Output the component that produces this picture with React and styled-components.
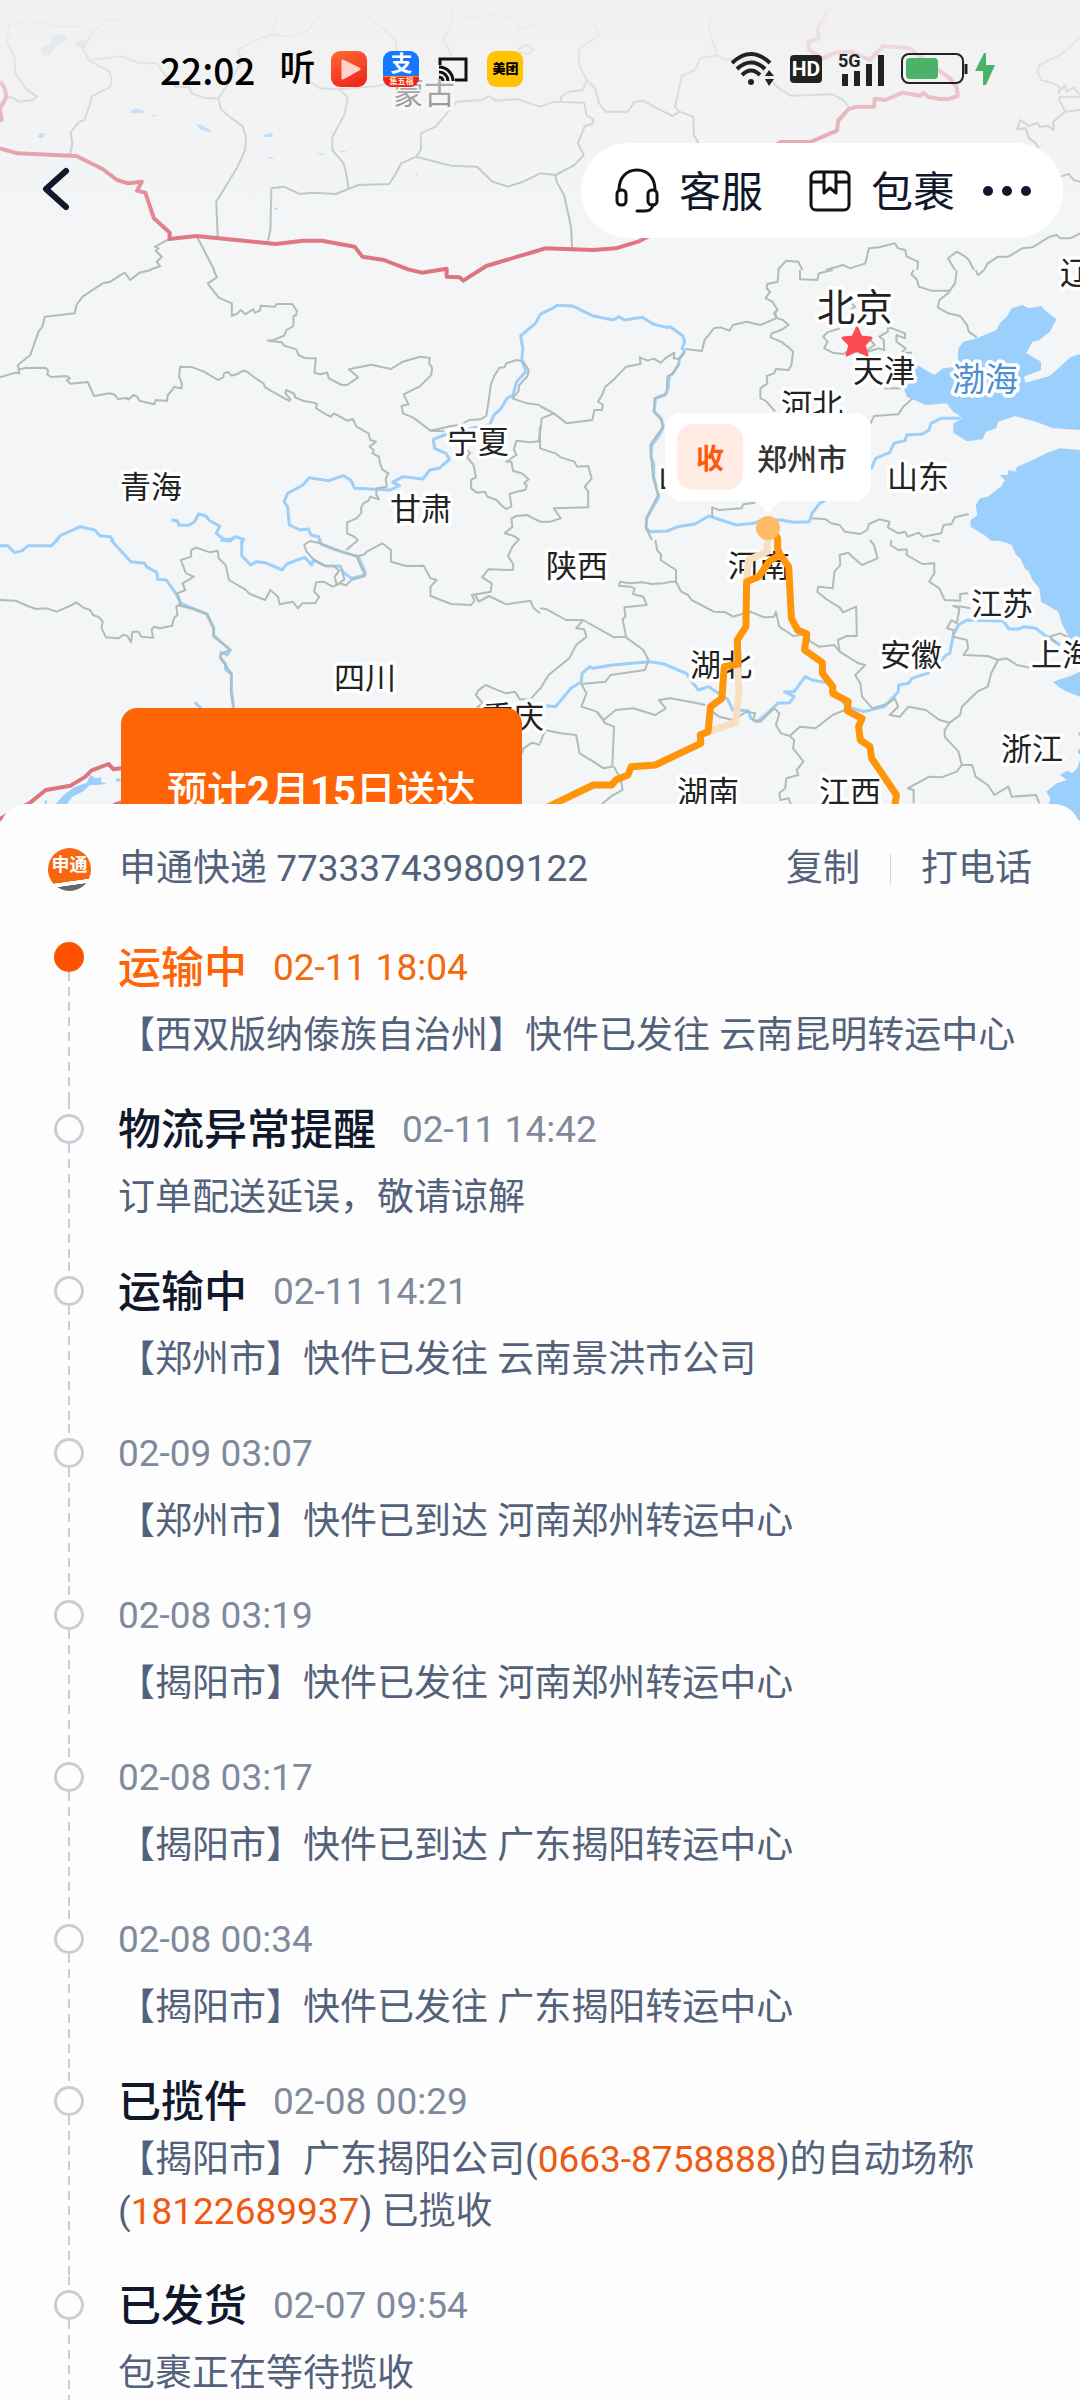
import React from "react";
import styled, { createGlobalStyle } from "styled-components";

const GlobalStyle = createGlobalStyle`
  * { box-sizing: border-box; }
  body {
    margin: 0;
    background: #fdfdfe;
    font-family: Roboto, "Noto Sans CJK SC", sans-serif;
  }
  button {
    padding: 0;
    border: 0;
    background: none;
    font: inherit;
    color: inherit;
    cursor: pointer;
  }
`;

const Page = styled.div`
  display: flex;
  flex-direction: column;
  height: 100vh;
  overflow: hidden;
`;

/* ---------- map ---------- */

const MapArea = styled.header`
  position: relative;
  flex: none;
  height: 804px;
`;

const MapSvg = styled.svg`
  position: absolute;
  top: 0;
  left: 0;
  width: 100%;
  height: 840px;
  background: #f4f5f7;
`;

const Line = styled.path`
  fill: none;
  stroke-linejoin: round;
  vector-effect: non-scaling-stroke;
`;

const Border = styled(Line)`
  stroke: #afbdb6;
  stroke-width: 2px;
`;

const Frontier = styled(Line)`
  stroke: #de7480;
  stroke-width: 4px;
`;

const River = styled(Line)`
  stroke: #9ccff9;
  stroke-width: 3px;
`;

const Route = styled(Line)`
  stroke: ${props => (props.$faint ? "#f8dfc0" : "#ff9508")};
  stroke-width: 7px;
`;

const Sea = styled.path`
  fill: #9bcffc;
`;

const Place = styled.text`
  font-family: "Noto Sans CJK SC", sans-serif;
  font-size: ${props => props.$size || 31}px;
  fill: ${props => props.$fill || "#222"};
  text-anchor: middle;
  stroke: #fff;
  stroke-width: 7px;
  stroke-linejoin: round;
  paint-order: stroke;
`;

const TopFade = styled.div`
  position: absolute;
  inset: 0 0 auto 0;
  height: 250px;
  background: linear-gradient(#f1f1f1, rgba(241, 241, 241, 0));
`;

// every section of the map has its own grid, 1568 units over 540px
const sections = [
  {
    x: 0,
    y: 0,
    borders: [
      "M130 5L95 45 70 65 25 75 20 130 42 170 45 220 75 265 107 290 95 300 55 305 35 292 15 292",
      "M70 65L120 65 180 80 245 78 267 100 240 150 265 185 318 215 325 240 318 262 265 290 262 310 245 360 230 365 205 398 210 430 203 465",
      "M267 100L310 60 400 55 460 10",
      "M265 180L350 168 405 190 455 190 490 240 510 260 550 262 555 280 600 295 635 295 700 190 692 150 740 120 790 105 845 108 890 95 920 60 930 40",
      "M635 295L640 325 660 345 705 380 714 410 712 450 690 500 628 605 632 710",
      "M800 0L805 40 790 105",
      "M890 240L930 265 985 268 1010 292 1000 345 965 410 965 450 998 490 1005 520 1012 565",
      "M1055 35L1100 75 1150 120 1155 240 1100 258 985 268",
      "M778 722L785 690 788 565 825 560 870 582 910 578 975 582 1040 555 1130 552 1150 520 1165 490 1208 470 1222 450 1222 400 1265 380 1310 325 1325 305 1400 300 1420 288 1440 302 1500 297 1568 320",
      "M1208 470L1310 497 1385 500 1430 545 1475 560 1520 545 1568 520",
      "M1315 0L1310 85 1285 120 1300 140 1310 170",
      "M1340 55L1420 45 1480 50 1510 85 1568 70",
      "M1505 145L1530 135 1550 148 1535 162 1510 158Z",
      "M490 718L450 740 460 745 452 752 465 765 470 770 455 785 465 798 435 810",
      "M573 712L622 810",
    ],
    frontiers: [
      "M0 445L50 460 222 468 298 507 340 540 372 550 412 545 398 572 422 578 447 655 493 698 492 717 570 708 800 732 880 722 935 722 1030 740 1052 770 1115 780 1185 808 1225 818 1297 806 1297 830 1335 832 1345 842 1412 798 1568 750",
      "M0 245Q20 265 17 295L0 325 5 365",
    ],
    seas: [
      "M118 145L145 130 150 105 190 103 197 120 165 140 145 165 125 165Z",
      "M218 130L235 118 255 122 245 145 225 140Z",
      "M245 165L272 180 258 186Z",
      "M377 335L395 325 418 332 415 340 380 340Z",
      "M433 342L455 345 450 352Z",
      "M567 372L585 375 615 392 610 397 585 390Z",
      "M763 405L790 398 793 410 770 412Z",
      "M775 472L802 474 780 477Z",
      "M108 410L120 398 132 402 122 415Z",
      "M917 461L950 461 935 466Z",
      "M987 452L1010 454 990 457Z",
      "M795 625L810 622 800 630Z",
      "M1205 522L1215 520 1210 526Z",
    ],
  },
  {
    x: 540,
    y: 0,
    borders: [
      "M115 20L165 80 172 105 115 145 112 190 135 240 160 265 172 310 190 335 255 335 275 305 300 302 340 325 385 348 405 335 392 320 412 228 450 210 465 175 515 165 490 90 497 50 475 20",
      "M515 165L535 178 620 178 690 262 728 287 850 283 880 300 900 325",
      "M135 240L125 270 85 275 62 290 60 305 128 308 135 345 155 358 152 372 130 378 110 430 127 465 100 495 45 525 0 520",
      "M0 320L35 307 60 305",
      "M45 525L48 545 70 585 90 680 93 745",
      "M405 335L445 350 447 405 460 430",
      "M1568 110L1540 140 1510 165 1450 195 1445 215 1455 240 1490 250 1510 262 1505 280 1525 255 1530 275 1550 262 1568 285",
      "M1568 290L1510 290 1508 300 1525 335 1490 365 1492 390 1475 378 1450 380 1445 368 1420 378 1395 360 1385 388 1410 385 1420 415 1440 430 1448 445",
      "M1568 330L1525 335",
      "M1510 530L1535 522 1550 540 1568 545",
      "M690 810L715 782 750 785 762 810",
      "M830 810L880 795 900 805 945 790 955 745 985 742 1030 730 1040 745 1060 750 1065 770 1098 785 1095 810",
      "M1205 810L1185 775 1210 755 1235 770 1245 780 1260 810",
      "M1290 810L1300 790 1330 770 1360 770 1400 745 1430 742 1480 710 1500 705 1510 715 1540 715 1568 700",
    ],
    frontiers: [
      "M0 750L15 745 155 750 220 745 285 725 310 712 600 480 700 426 785 426 862 392 866 362 895 328 918 320 970 320 972 296 1002 300 1053 278 1105 287 1112 278 1128 291 1160 297 1190 296 1213 288 1210 262 1190 235 1072 145 997 138 958 180 905 155 860 157 820 175 782 150 778 125 810 115 805 85 842 20",
    ],
    seas: ["M515 398L533 378 520 395Z"],
  },
  {
    x: 0,
    y: 270,
    borders: [
      "M438 0L405 8 378 30 362 8 320 35 298 40 240 80 222 105 217 130 130 140 123 170 112 185 88 255 52 285 56 310 45 308 0 322",
      "M56 298L75 294 132 293 140 302 137 313 148 321 193 318 203 325 194 332 205 341 255 336 273 378 318 370 333 374 342 387 368 384 372 389 388 375 398 380 405 392 435 400 448 403 452 390 485 393 487 375 500 360 505 351 527 355 528 340 520 320 523 290 560 292 592 305 633 330 648 322 650 310 662 306 672 317 690 312 705 302 718 305 738 322 765 340 770 352 800 370 840 393 843 388 828 368 832 360 855 372 857 382 882 393 912 398 920 402 918 415 950 435 960 440 970 430 1008 452 1025 447 1035 470 1070 490 1075 510 1092 515 1073 530 1085 540 1082 550 1100 560 1103 578 1110 598 1128 610 1120 625 1123 650 1095 655 1092 672 1100 688 1075 680 1070 692 1055 700 1048 715 1050 728 1035 745 1008 757 1008 790 1025 798 1040 810",
      "M620 0L630 22 603 40 635 83 673 100 673 138 690 130 700 120 712 133 735 118 740 128 755 122 757 107 798 110 803 102 848 102 862 122 860 135 852 138 852 168 832 180 825 197 795 210 778 212 818 217 825 227 860 238 867 255 885 264 917 265 913 308 930 313 950 308 955 325 992 345 1008 345 1040 322 1013 298 1078 284 1135 297 1170 275 1220 260 1248 264 1246 280 1255 295 1252 315 1218 350 1172 373 1186 403 1166 408 1170 430 1200 443 1250 482 1310 468 1338 464 1362 450 1395 448 1412 438 1420 385 1425 345 1435 318 1450 293 1465 292 1470 280 1500 270 1520 275 1535 300 1532 318 1508 345 1505 365 1488 385 1530 400 1568 405",
      "M1250 482L1290 484",
      "M1358 540L1365 550 1355 560 1375 585 1382 622 1368 630 1368 655 1385 668 1408 665 1415 680 1442 690 1455 705 1470 717 1485 710 1480 672 1500 665 1525 660 1530 645 1522 640 1535 628 1515 610 1490 603 1485 575 1470 575 1488 562 1500 555 1492 538 1500 512 1540 517 1568 513",
      "M1568 755L1530 735 1500 738 1485 745 1488 770 1465 790 1490 797 1510 810",
      "M1568 470L1565 515",
    ],
    rivers: [
      "M1568 133L1555 160 1512 197 1518 235 1515 270 1527 305 1500 335 1490 375 1472 385 1455 415 1433 437 1422 465 1370 475 1290 495 1258 508 1262 535 1295 550 1305 568 1275 595 1248 600 1228 627 1170 620 1140 637 1160 647 1133 660 1030 655 1018 630 998 617 955 632 898 623 880 645 835 670 825 695 835 710 840 765 872 780 895 777 903 795 925 800 930 822",
      "M160 815L175 797 233 770 275 780 290 797 320 800 330 815",
      "M498 750L515 753 520 766 548 766 565 755 577 732 598 738 608 752 638 768 628 790 650 808 672 808 683 800 708 808 704 815",
    ],
  },
  {
    x: 540,
    y: 270,
    borders: [
      "M693 0L690 35 660 42 658 55 668 65 655 85 675 95 690 120 680 130 690 145 705 150 722 165 700 180 672 190 670 203 700 215 722 232 735 245 730 285 722 300 685 297 680 310 658 318 660 340 640 355 640 385 655 392 683 425",
      "M683 122L685 145 640 165 600 155 560 165 550 182 525 172 505 175 478 210 470 243 422 237",
      "M420 248L405 267 388 265 390 248 368 262 350 278 330 266 312 272 290 262 292 282 250 290 215 328 190 350 180 375 168 395 183 405 180 420 158 420 152 450 112 455 78 460 40 430 0 408",
      "M40 430L5 445 0 490 0 535 45 550 60 562 100 575 108 590 140 588 150 625 130 650 140 665 140 712 40 715 60 745 30 755 0 755",
      "M405 280L385 310 370 320 368 370 333 385 330 425 352 450 357 470 320 525 328 620 343 675 308 745 308 775 325 810",
      "M500 740L500 712 520 720 585 715 590 703 625 698",
      "M790 745L830 748 845 760 870 765 885 785 930 792 950 780 955 762 985 748 1015 755 1010 772 1040 790 1060 785 1068 800 1100 788 1112 800 1165 790 1172 765 1195 762 1205 742 1245 732",
      "M755 0L755 28 805 30 810 10 850 0",
      "M1085 0L1078 12 1095 30 1100 50 1135 62 1190 62 1205 40 1210 0",
      "M1190 65L1160 90 1155 112 1185 130 1220 138 1240 165 1245 185 1268 202",
      "M1265 0L1272 15 1290 0",
      "M870 175L835 187 822 200 835 215 825 235 850 248 880 252 900 240 935 250 985 235 1000 240 998 210 985 200 1010 185 1010 170 1060 190 1060 205 1035 195 1035 215 1062 235 1050 248 1080 248",
      "M950 200L972 225 950 240",
      "M1000 355L1050 355",
      "M960 460L970 438 1040 433 1055 410 1082 385",
      "M905 100L915 110 900 120",
    ],
    rivers: [
      "M0 133L42 112 48 106 95 108 152 137 212 150 230 140 245 150 297 142 330 163 370 173 378 170 415 198 420 215 413 235 420 245 405 265 403 282 385 312 375 318 372 355 363 375 335 385 332 425 352 445 358 470 350 490 325 525 322 560 330 580 330 620 345 680 310 745 308 775 320 785 370 783 400 770 450 762 490 738 570 765 620 760 645 750 700 750 735 757 782 755 790 730 812 700 880 660 962 595 975 565 1015 548 1028 520 1060 512 1065 495 1110 492 1130 480 1135 460 1165 445 1222 445",
    ],
    seas: [
      "M1212 290L1215 235 1230 215 1268 205 1325 180 1335 160 1355 140 1370 115 1400 105 1420 115 1455 108 1465 120 1500 148 1480 185 1450 210 1430 215 1412 250 1455 275 1455 300 1405 320 1410 338 1480 318 1510 290 1540 262 1568 252 1568 480 1490 475 1440 455 1380 438 1330 455 1325 475 1295 485 1285 508 1240 514 1200 488 1200 460 1228 445 1200 425 1180 400 1120 405 1065 380 1055 350 1095 285 1145 315 1170 295Z",
      "M1568 540L1510 535 1470 550 1420 575 1385 590 1380 605 1360 600 1358 615 1335 615 1350 630 1340 648 1300 680 1278 685 1265 705 1270 735 1250 750 1250 770 1290 795 1310 812 1568 812Z",
    ],
  },
  {
    x: 0,
    y: 540,
    borders: [
      "M0 180L45 182 80 198 105 207 135 205 165 215 205 197 222 187 240 202 262 210 270 225 288 232 298 245 295 265 308 292 345 295 358 284 370 288 380 307 385 275 402 275 410 290 445 293 440 270 447 260 465 265 500 257 505 235 515 225 512 200 525 190 515 160 538 150 530 130 563 110 540 100 525 60 555 50 555 30 570 23 610 37 632 32 635 55 655 75 665 120 712 148 725 162 770 180 785 150 807 170 812 193 850 185 865 205 878 190 915 190 927 170 912 155 918 127 940 125 965 140 990 130 1005 137 1020 120 1060 108",
      "M515 195L560 207 602 222 622 265 620 290 670 330 642 340 640 355 672 400 670 455 678 503",
      "M930 10L900 3 883 15 890 35 912 60 945 78 970 78 985 92 972 110 978 135 1000 118 992 88",
      "M930 10L1000 38 1035 48 1048 80 1060 105",
      "M1035 48L1055 45 1065 35 1110 10 1135 30 1135 65 1180 78 1230 77 1250 115 1268 120 1250 140 1250 168 1310 192 1368 195 1378 182 1370 165 1425 155 1428 130 1400 112 1418 88 1490 90 1490 72 1475 48 1488 20 1505 0",
      "M1005 30L1040 0",
      "M1380 165L1390 185 1420 168 1470 193 1540 182 1550 205 1568 220",
      "M1385 503L1402 490 1382 465 1388 452 1410 435 1440 448 1470 460 1495 455 1510 478 1540 478 1568 445",
      "M1515 640L1520 625 1545 608 1568 615",
    ],
    rivers: [
      "M0 17L22 17 42 38 65 32 82 17 150 17 168 -2",
      "M322 0L380 65 420 70 425 80 455 97 458 118 483 120 510 160 525 190 600 222 620 265 620 285 668 330 660 345 642 337 640 352 655 372 655 388 672 402 672 450 678 503",
      "M640 0L668 3 675 -3",
      "M702 0L702 47 728 75 745 65 770 68 820 90 832 72 885 52 905 75 910 60 945 78 988 78 995 95 1020 115 1060 105 1060 95 1040 50 970 28 932 12 928 -4",
      "M565 487L590 510",
      "M337 720L350 720",
    ],
    frontiers: [
      "M-5 840L20 825 85 790 133 750 205 737 248 710 265 692 315 672 330 688 360 683",
      "M330 795L360 785",
    ],
    seas: [
      "M162 792L185 765 215 742 252 728 262 705 278 715 295 712 292 725 310 732 280 735 262 735 240 755 210 770 195 792Z",
      "M130 782L137 780 135 792 130 792Z",
    ],
  },
  {
    x: 540,
    y: 540,
    borders: [
      "M335 0L340 30 352 45 350 60 395 90 395 125 380 125 360 130 325 132 295 127 260 130 232 125 230 137 262 140 275 145 270 162 300 170 310 195 245 202 248 230 240 238 250 290 215 292 125 240 75 240 20 208 0 205",
      "M395 125L410 155 430 165 440 180 505 215 540 217 560 230 610 215 650 232 680 230 685 215 695 260 735 288 775 282 785 305 810 320 855 315 870 335 865 300 890 288 920 288 918 200 880 217 870 202 835 180 805 155 808 140 850 145 855 95 872 75 870 45 895 38 912 55 935 75 980 55 970 15 958 0",
      "M125 240L105 265 128 268 135 290 105 315 85 355 25 405 0 448",
      "M250 292L300 330 315 360 305 390 205 405 190 425 120 432 135 460 120 500 165 515",
      "M165 515L185 540 220 510 270 505 335 525 365 505 345 480 378 475 450 488 480 495",
      "M0 610L15 570 60 580 105 585 115 640 155 665 185 685 210 680 215 560 190 550 165 515",
      "M215 680L235 720 240 750 205 770 180 792",
      "M500 515L520 530 560 540 600 515 625 520 618 540 640 545 680 505 695 520 685 555 700 580 725 588",
      "M725 588L755 560 800 565 850 525 885 510",
      "M725 588L738 600 735 625 765 665 745 690 750 705 715 715 712 745 695 760 698 780 722 775 728 792",
      "M870 335L925 370 945 375 915 405 930 430 935 470 965 505 1010 490 1030 475 1040 500 1015 525 1045 530 1070 500 1120 510 1160 540 1190 548",
      "M1020 0L1018 15 1040 30 1065 28 1065 45 1110 72 1145 70 1145 100 1130 125 1160 145 1175 180 1220 182 1220 162 1243 160",
      "M1140 0L1160 5",
      "M1250 205L1225 200 1200 198 1218 205 1210 250 1195 240 1182 265 1200 270 1200 290 1240 300 1243 325 1230 345 1300 348 1330 360 1355 355 1385 375 1430 385",
      "M1330 360L1310 400 1300 440 1270 455 1250 475 1225 500 1220 525 1190 548 1175 570 1175 590 1215 635 1225 675",
      "M1225 675L1210 695 1165 712 1130 710 1068 745 1085 750 1085 790",
      "M1225 675L1255 675 1265 710 1300 735 1320 765 1360 740 1370 770 1440 765 1450 790",
      "M1500 310L1480 290 1510 280 1535 292",
    ],
    rivers: [
      "M15 497L45 500 90 445 120 425 122 400 145 380 155 385 210 375 320 365 360 372 400 390 425 400 445 430 460 450 490 440 545 478 560 510 605 512 612 535 630 545 660 520 690 490 725 488 738 470 710 455 738 455 770 410 790 420 840 430 890 500 940 515 1000 500 1040 455 1042 435 1070 430 1080 415 1130 398 1180 345 1190 340 1200 285 1215 255 1240 240 1345 243 1362 267 1390 267 1405 260 1440 265 1465 285 1510 315",
    ],
    seas: [
      "M1310 -2L1345 5 1370 15 1382 45 1395 55 1408 85 1420 95 1430 120 1450 145 1455 185 1505 215 1515 250 1535 290 1550 310 1568 370 1568 -2Z",
      "M1568 395L1540 408 1490 425 1505 440 1530 455 1568 470Z",
      "M1568 575L1562 580 1568 590ZM1568 625L1560 635 1568 645Z",
      "M1568 660L1560 685 1545 700 1530 692 1510 705 1530 720 1500 730 1470 755 1482 775 1475 800 1500 840 1568 840Z",
    ],
  },
];

const faintRoutes = [
  "M680 -40L660 -5 660 35 605 60 600 125",
  "M572 372L578 450 568 548 488 575",
];
const routes = [
  "M695 45L665 65 635 110 600 125 598 260 573 300 575 372 535 380 528 475 495 500 488 575 465 585 467 610 335 675 265 680 255 705 220 720 208 735 155 735 20 802",
  "M662 -40L680 -22 690 -5 690 25 695 40 722 80 730 235 748 270 775 282 768 330 820 368 820 400 850 440 850 460 895 485 892 512 935 535 925 560 930 600 958 620 963 655 1035 765 1028 810",
];

const places = [
  ["蒙古", 424, 92],
  ["辽宁", 1091, 272],
  ["天津", 884, 370],
  ["河北", 812, 404],
  ["宁夏", 478, 441],
  ["山西", 689, 476],
  ["山东", 918, 476],
  ["青海", 151, 486],
  ["甘肃", 421, 508],
  ["陕西", 577, 565],
  ["河南", 759, 565],
  ["江苏", 1002, 603],
  ["安徽", 911, 654],
  ["上海", 1062, 654],
  ["湖北", 721, 664],
  ["四川", 365, 677],
  ["重庆", 513, 716],
  ["浙江", 1032, 748],
  ["湖南", 708, 791],
  ["江西", 850, 791],
];

const RouteMap = () => (
  <MapSvg viewBox="0 0 1080 840" preserveAspectRatio="xMidYMin slice">
    {sections.map((s, i) => (
      <g key={i} transform={`translate(${s.x} ${s.y}) scale(0.34439 0.33333)`}>
        {(s.seas || []).map(d => <Sea key={d} d={d} />)}
        {(s.rivers || []).map(d => <River key={d} d={d} />)}
        {s.borders.map(d => <Border key={d} d={d} />)}
        {(s.frontiers || []).map(d => <Frontier key={d} d={d} />)}
      </g>
    ))}
    {places.map(([name, x, y]) => (
      <Place key={name} x={x} y={y + 12}>{name}</Place>
    ))}
    <Place x="855" y="321" $size={38}>北京</Place>
    <Place x="985" y="391" $size={33} $fill="#4c8fd6">渤海</Place>
    <path
      d="M857 328l4 9 10 1-7 7 3 10-10-5-10 5 3-10-7-7 10-1z"
      fill="#fc4b52"
      stroke="#fc4b52"
      strokeWidth="3"
      strokeLinejoin="round"
    />
    <g transform="translate(540 540) scale(0.34439 0.33333)">
      {faintRoutes.map(d => <Route key={d} d={d} $faint />)}
      {routes.map(d => <Route key={d} d={d} />)}
    </g>
    <circle cx="768" cy="528" r="12" fill="#ffbb68" />
  </MapSvg>
);

const Callout = styled.div`
  position: absolute;
  left: 665px;
  top: 413px;
  display: flex;
  align-items: center;
  gap: 14px;
  height: 88px;
  padding: 0 24px 0 12px;
  border-radius: 16px;
  background: #fff;
  color: #333;
  font-size: 30px;
  font-weight: 500;

  &::after {
    content: "";
    position: absolute;
    left: 50%;
    top: 100%;
    margin-left: -12px;
    border: 12px solid transparent;
    border-top-color: #fff;
    border-bottom: 0;
  }
`;

const ReceiveBadge = styled.span`
  display: flex;
  align-items: center;
  justify-content: center;
  width: 66px;
  height: 66px;
  border-radius: 16px;
  background: #ffece4;
  color: #ff5a0a;
  font-size: 28px;
  font-weight: 700;
`;

const Estimate = styled.div`
  position: absolute;
  left: 121px;
  top: 708px;
  height: 120px;
  padding: 56px 46px 0;
  border-radius: 16px;
  background: #ff6405;
  color: #fff;
  font-size: 40px;
  font-weight: 500;
  line-height: 56px;
  white-space: nowrap;
`;

/* ---------- status bar ---------- */

const StatusBar = styled.div`
  position: relative;
  display: flex;
  align-items: center;
  justify-content: space-between;
  height: 138px;
  padding: 0 85px 0 160px;
`;

const StatusGroup = styled.div`
  display: flex;
  align-items: center;
  gap: ${props => props.$gap}px;
`;

const Clock = styled.span`
  margin-right: 8px;
  font-family: "Noto Sans CJK SC", sans-serif;
  font-size: 37px;
  font-weight: 500;
  line-height: 54px;
  color: #000;
`;

const AppIcon = styled.span`
  position: relative;
  display: flex;
  align-items: center;
  justify-content: center;
  width: 36px;
  height: 36px;
  border-radius: 9px;
  background: ${props => props.$bg || "none"};
  color: ${props => props.$color || "#000"};
  font-size: ${props => props.$size || 36}px;
  font-weight: ${props => props.$weight || 400};
  line-height: 36px;
  white-space: nowrap;
`;

const PaySign = styled.span`
  padding-bottom: 10px;
  line-height: 26px;
`;

const PayFoot = styled.span`
  position: absolute;
  inset: auto 0 0 0;
  height: 11px;
  border-radius: 0 0 9px 9px;
  border-top: 1px solid #ff8a1e;
  background: #f5221c;
  color: #ffe9c9;
  font-size: 8px;
  font-weight: 700;
  line-height: 9px;
  text-align: center;
`;

const HdMark = styled.span`
  width: 32px;
  height: 28px;
  border-radius: 4px;
  background: #222;
  color: #fff;
  font-size: 21px;
  font-weight: 700;
  line-height: 28px;
  text-align: center;
`;

const StatusIcons = () => (
  <StatusBar>
    <StatusGroup $gap={16}>
      <Clock>22:02</Clock>
      <AppIcon $weight={500}>听</AppIcon>
      <AppIcon $bg="linear-gradient(160deg, #ff6a34, #ef2018)">
        <svg width="36" height="36" viewBox="0 0 36 36">
          <path d="M12 10v17l16-9z" fill="#ffd3cb" stroke="#ffd3cb" strokeWidth="3" strokeLinejoin="round" />
        </svg>
      </AppIcon>
      <AppIcon $bg="#1677ff" $color="#fff" $size={22} $weight={700}>
        <PaySign>支</PaySign>
        <PayFoot>集五福</PayFoot>
      </AppIcon>
      <svg width="36" height="36" viewBox="0 0 36 36" fill="none" stroke="#111" strokeWidth="3">
        <path d="M5 14V8h26v21H20" />
        <path d="M4 26a4 4 0 0 1 4 4M4 21a9 9 0 0 1 9 9M4 16a14 14 0 0 1 14 14" />
      </svg>
      <AppIcon $bg="#ffc300" $size={13} $weight={900}>美团</AppIcon>
    </StatusGroup>
    <StatusGroup $gap={16}>
      <svg width="43" height="36" viewBox="1 0 43 36" fill="none" stroke="#222" strokeWidth="4">
        <path d="M2 12Q21-6 40 12M7 18Q21 5 35 18M12 24Q21 15 30 24" />
        <circle cx="21" cy="31" r="3" fill="#222" stroke="none" />
        <path d="M35 25l4-6 5 6zM35 28h9l-5 7z" fill="#222" stroke="none" />
      </svg>
      <HdMark>HD</HdMark>
      <svg width="47" height="34" viewBox="0 0 47 34" fill="#222">
        <path d="M4 22h6v12h-6zM16 19h6v15h-6zM28 12h6v22h-6zM40 3h6v31h-6z" />
        <text x="0" y="15" fontFamily="Roboto" fontSize="18" fontWeight="700">5G</text>
      </svg>
      <StatusGroup $gap={7}>
        <svg width="67" height="32" viewBox="0 0 67 32" fill="none">
          <rect x="1" y="1" width="61" height="29" rx="7" stroke="#222" strokeWidth="2" />
          <rect x="5" y="5" width="32" height="21" rx="4" fill="#4bb269" />
          <path d="M65 11v10" stroke="#222" strokeWidth="3" />
        </svg>
        <svg width="20" height="32" viewBox="0 0 20 32" fill="#4bb269">
          <path d="M9 0L0 18h8v14h3l9-20h-9V0z" />
        </svg>
      </StatusGroup>
    </StatusGroup>
  </StatusBar>
);

/* ---------- nav ---------- */

const NavBar = styled.nav`
  position: relative;
  display: flex;
  align-items: center;
  justify-content: space-between;
  margin-top: 5px;
  padding: 0 17px 0 40px;
`;

const NavPill = styled.div`
  display: flex;
  align-items: center;
  gap: 28px;
  height: 95px;
  padding: 0 32px 0 34px;
  border-radius: 48px;
  background: #fff;
  color: #11182c;
`;

const NavLinks = styled.div`
  display: flex;
  gap: 46px;
`;

const NavButton = styled.button`
  display: flex;
  align-items: center;
  gap: 20px;
  padding-top: 4px;
  font-size: 42px;
  line-height: 60px;

  svg {
    margin-bottom: 4px;
  }
`;

const MoreButton = styled.button`
  display: flex;
`;

/* ---------- sheet ---------- */

const Sheet = styled.main`
  position: relative;
  flex: 1;
  min-height: 0;
  overflow: hidden;
  border-radius: 26px 26px 0 0;
  background: #fdfdfe;
`;

const Carrier = styled.section`
  display: flex;
  align-items: center;
  height: 130px;
  margin-bottom: 4px;
  padding: 0 48px;
  color: #53627a;
  font-size: 37px;
  line-height: 52px;
`;

const CarrierLogo = styled.span`
  width: 43px;
  height: 43px;
  margin-right: 28px;
  border-radius: 50%;
  background: linear-gradient(172deg, #f8670f 74%, #fff 75%, #fff 82%, #666 83%);
  color: #fff;
  font-size: 18px;
  font-weight: 700;
  line-height: 34px;
  text-align: center;
  white-space: nowrap;
`;

const CarrierActions = styled.div`
  display: flex;
  align-items: center;
  gap: 30px;
  margin-left: auto;
`;

const Divider = styled.span`
  width: 1px;
  height: 31px;
  background: #d3d6dc;
`;

const Timeline = styled.ol`
  margin: 0;
  padding: 0 36px 0 54px;
  list-style: none;
`;

const Event = styled.li`
  display: flex;
  gap: 34px;
`;

const dashes = "repeating-linear-gradient(#c9cdd5 0 9px, transparent 9px 15px)";

const Rail = styled.div`
  display: flex;
  flex: none;
  flex-direction: column;
  align-items: center;
  width: 30px;

  &::before {
    content: "";
    width: 2px;
    height: ${props => (props.$current ? "4px" : "14px")};
    background: ${props => (props.$current ? "none" : dashes)};
  }

  &::after {
    content: "";
    flex: 1;
    width: 2px;
    background: ${dashes};
  }
`;

const Dot = styled.span`
  width: 30px;
  height: 30px;
  border: 3px solid ${props => (props.$current ? "#ff5200" : "#c9cdd5")};
  border-radius: 50%;
  background: ${props => (props.$current ? "#ff5200" : "none")};
`;

const EventBody = styled.div`
  flex: 1;
  padding-bottom: 28px;
`;

const EventHead = styled.div`
  display: flex;
  gap: 26px;
  height: 60px;
  line-height: 60px;
`;

const EventTitle = styled.h2`
  margin: 0;
  color: ${props => (props.$current ? "#ff6405" : "#11182c")};
  font-size: 43px;
  font-weight: 500;
`;

const EventTime = styled.time`
  color: ${props => (props.$current ? "#f3690f" : "#7f8a9c")};
  font-size: 37px;
`;

const EventText = styled.p`
  margin: 2px 0 0;
  padding-bottom: ${props => (props.$multi ? "10px" : "0")};
  color: #53627a;
  font-size: 37px;
  line-height: ${props => (props.$multi ? "52px" : "72px")};
`;

const Phone = styled.a`
  color: #ee5a12;
  text-decoration: none;
`;

const events = [
  { title: "运输中", time: "02-11 18:04", text: "【西双版纳傣族自治州】快件已发往 云南昆明转运中心", current: true },
  { title: "物流异常提醒", time: "02-11 14:42", text: "订单配送延误，敬请谅解" },
  { title: "运输中", time: "02-11 14:21", text: "【郑州市】快件已发往 云南景洪市公司" },
  { time: "02-09 03:07", text: "【郑州市】快件已到达 河南郑州转运中心" },
  { time: "02-08 03:19", text: "【揭阳市】快件已发往 河南郑州转运中心" },
  { time: "02-08 03:17", text: "【揭阳市】快件已到达 广东揭阳转运中心" },
  { time: "02-08 00:34", text: "【揭阳市】快件已发往 广东揭阳转运中心" },
  {
    title: "已揽件",
    time: "02-08 00:29",
    multi: true,
    text: (
      <>
        【揭阳市】广东揭阳公司(<Phone href="tel:0663-8758888">0663-8758888</Phone>)的自动场称
        <br />
        (<Phone href="tel:18122689937">18122689937</Phone>) 已揽收
      </>
    ),
  },
  { title: "已发货", time: "02-07 09:54", text: "包裹正在等待揽收" },
];

export default function App() {
  return (
    <Page lang="zh-CN">
      <GlobalStyle />
      <MapArea>
        <RouteMap />
        <TopFade />
        <Callout>
          <ReceiveBadge>收</ReceiveBadge>
          郑州市
        </Callout>
        <Estimate>预计<b>2</b>月<b>15</b>日送达</Estimate>
        <StatusIcons />
        <NavBar>
          <button aria-label="返回">
            <svg width="32" height="48" viewBox="0 0 32 48" fill="none" stroke="#11182c" strokeWidth="6" strokeLinecap="round" strokeLinejoin="round">
              <path d="M26 6L6 24l20 18" />
            </svg>
          </button>
          <NavPill>
            <NavLinks>
              <NavButton>
                <svg width="44" height="46" viewBox="0 0 44 46" fill="none" stroke="#111" strokeWidth="3" strokeLinecap="round" strokeLinejoin="round">
                  <path d="M4 22C4 10 11 2 22 2s18 8 18 20" />
                  <rect x="2" y="22" width="9" height="15" rx="4" />
                  <rect x="33" y="22" width="9" height="15" rx="4" />
                  <path d="M38 37c-1 4-3 6-8 6h-8" />
                </svg>
                客服
              </NavButton>
              <NavButton>
                <svg width="42" height="42" viewBox="0 0 42 42" fill="none" stroke="#111" strokeWidth="3" strokeLinejoin="round">
                  <rect x="2" y="2" width="38" height="38" rx="5" />
                  <path d="M2 12h13M27 12h13M15 2v21l6-5 6 5V2" />
                </svg>
                包裹
              </NavButton>
            </NavLinks>
            <MoreButton aria-label="更多">
              <svg width="48" height="12" viewBox="0 0 48 12" fill="#11182c">
                <circle cx="5" cy="6" r="5" />
                <circle cx="24" cy="6" r="5" />
                <circle cx="43" cy="6" r="5" />
              </svg>
            </MoreButton>
          </NavPill>
        </NavBar>
      </MapArea>
      <Sheet>
        <Carrier>
          <CarrierLogo>申通</CarrierLogo>
          <span>申通快递 773337439809122</span>
          <CarrierActions>
            <button>复制</button>
            <Divider />
            <button>打电话</button>
          </CarrierActions>
        </Carrier>
        <Timeline>
          {events.map(event => (
            <Event key={event.time}>
              <Rail $current={event.current}>
                <Dot $current={event.current} />
              </Rail>
              <EventBody>
                <EventHead>
                  {event.title && <EventTitle $current={event.current}>{event.title}</EventTitle>}
                  <EventTime $current={event.current}>{event.time}</EventTime>
                </EventHead>
                <EventText $multi={event.multi}>{event.text}</EventText>
              </EventBody>
            </Event>
          ))}
        </Timeline>
      </Sheet>
    </Page>
  );
}
